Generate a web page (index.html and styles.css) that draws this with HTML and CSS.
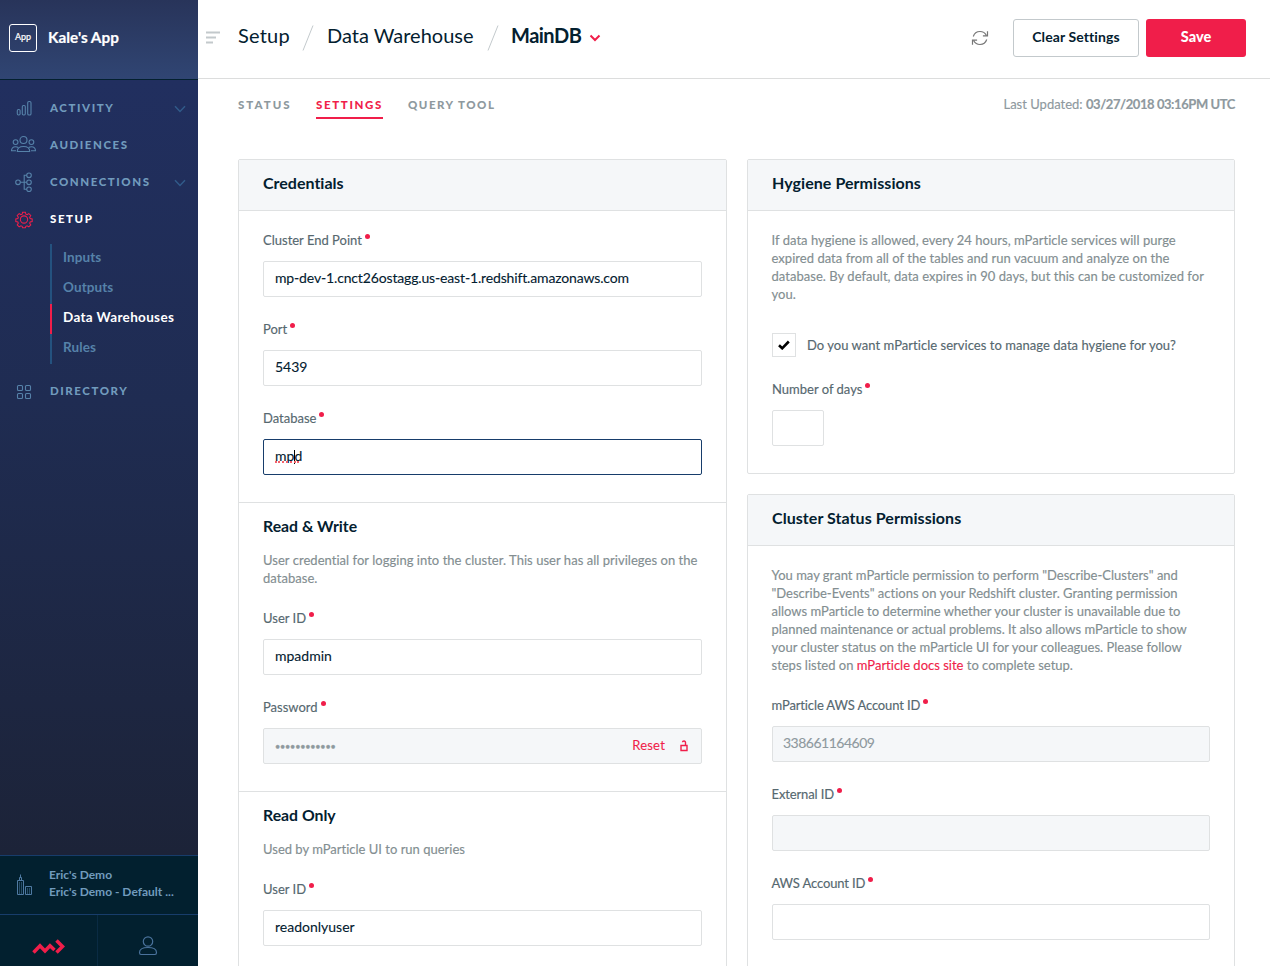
FILE: index.html
```html
<!DOCTYPE html>
<html lang="en">
<head>
<meta charset="utf-8">
<title>MainDB - Data Warehouse</title>
<link rel="stylesheet" href="styles.css">
</head>
<body>
<div class="app">
  <aside class="sidebar">
    <div class="brand">
      <span class="brand-logo">App</span>
      <span class="brand-name">Kale's App</span>
    </div>
    <nav class="nav">
      <a class="nav-item">
        <svg class="nav-icon" width="26" height="20" viewBox="0 0 26 20"><rect x="6.300" y="11.500" width="2.800" height="5.500" rx="1.200"/><rect x="11.300" y="7.500" width="3" height="9.500" rx="1.200"/><rect x="16.700" y="3.500" width="3.300" height="13.500" rx="1.300"/></svg>
        <span class="nav-text">ACTIVITY</span>
        <svg class="nav-chevron" width="12" height="8" viewBox="0 0 12 8"><path d="M1 1.200 6 6.400 11 1.200"/></svg>
      </a>
      <a class="nav-item">
        <svg class="nav-icon" width="26" height="20" viewBox="0 0 26 20"><circle cx="12.500" cy="5" r="3.500"/><circle cx="4.600" cy="7.100" r="2.400"/><circle cx="20.400" cy="7.100" r="2.400"/><path d="M6.300 16.500c0-3.300 2.800-5 6.200-5s6.200 1.700 6.200 5zM5 15.800H.5c0-2.600 1.500-4.100 4-4.100 1.100 0 2 .3 2.700.8M20 15.800h4.500c0-2.600-1.500-4.100-4-4.100-1.100 0-2 .3-2.700.8"/></svg>
        <span class="nav-text">AUDIENCES</span>
      </a>
      <a class="nav-item">
        <svg class="nav-icon" width="26" height="20" viewBox="0 0 26 20"><circle cx="7" cy="10.300" r="2.300"/><circle cx="18" cy="3.300" r="2.300"/><circle cx="18" cy="10.300" r="2.300"/><circle cx="18" cy="17.300" r="2.300"/><path d="M9.300 10.300h6.400M15.700 3.300h-2.500v14h2.500"/></svg>
        <span class="nav-text">CONNECTIONS</span>
        <svg class="nav-chevron" width="12" height="8" viewBox="0 0 12 8"><path d="M1 1.200 6 6.400 11 1.200"/></svg>
      </a>
      <a class="nav-item active">
        <svg class="nav-icon" width="26" height="20" viewBox="0 0 26 20"><g transform="translate(13 10.500) scale(.93)"><circle r="3.900"/><path d="M-1.500-7.800h3l.5 2 1.300.6 1.900-1.200 2.100 2.100-1.200 1.900.5 1.300 2.200.5v2.800l-2.200.5-.5 1.200 1.200 1.900-2.100 2.100-1.900-1.200-1.300.6-.5 1.500h-3l-.5-1.500-1.300-.6-1.900 1.200-2.100-2.100 1.200-1.900-.5-1.200-2.200-.5V-.6l2.200-.5.5-1.300-1.200-1.900 2.100-2.100 1.900 1.200 1.300-.6z"/></g></svg>
        <span class="nav-text">SETUP</span>
      </a>
      <div class="subnav">
        <a class="subnav-item">Inputs</a>
        <a class="subnav-item">Outputs</a>
        <a class="subnav-item current">Data Warehouses</a>
        <a class="subnav-item">Rules</a>
      </div>
      <a class="nav-item">
        <svg class="nav-icon" width="26" height="20" viewBox="0 0 26 20"><rect x="6.500" y="4.500" width="5" height="5" rx="1"/><rect x="14.500" y="4.500" width="5" height="5" rx="1"/><rect x="6.500" y="12.500" width="5" height="5" rx="1"/><rect x="14.500" y="12.500" width="5" height="5" rx="1"/></svg>
        <span class="nav-text">DIRECTORY</span>
      </a>
    </nav>
    <div class="account">
      <svg class="account-icon" width="16" height="22" viewBox="0 0 16 22"><path d="M.5 6.500h6v14h-6zM8.500 12.500h6v8h-6zM2.500 6.500v-3h2v3M3.500 3.500V.5"/><path class="windows" d="M2.500 8.500v11M4.500 8.500v11M10.500 14.500v5M12.500 14.500v5"/></svg>
      <div class="account-text">
        <div>Eric's Demo</div>
        <div>Eric's Demo - Default ...</div>
      </div>
    </div>
    <div class="dock">
      <div class="dock-cell logo-cell"><svg width="34" height="16" viewBox="0 0 34 16"><path class="logo-line" d="M1.500 13.500 8 6.800l5 5.200 5-5.200 4.500 4.200M24.500 1.500l6 6-6 6"/></svg></div>
      <div class="dock-cell"><svg width="20" height="20" viewBox="0 0 20 20"><g class="user-line"><circle cx="10" cy="5.500" r="4.700"/><path d="M1.500 16.500c0-3.300 3.200-5 8.500-5s8.500 1.700 8.500 5c0 1.500-.5 2-1.500 2H3c-1 0-1.500-.5-1.500-2z"/></g></svg></div>
    </div>
  </aside>

  <div class="main">
    <header class="topbar">
      <svg class="menu-icon" width="14" height="13" viewBox="0 0 14 13"><path d="M0 1.500h14M0 6.500h10M0 11.500h7"/></svg>
      <div class="crumbs">
        <span class="crumb c-setup">Setup</span>
        <svg class="slash" width="12" height="26" viewBox="0 0 12 26"><path d="M1 25.500 11 .5"/></svg>
        <span class="crumb c-warehouse">Data Warehouse</span>
        <svg class="slash" width="12" height="26" viewBox="0 0 12 26"><path d="M1 25.500 11 .5"/></svg>
        <span class="crumb c-db">MainDB</span>
        <svg class="crumb-chevron" width="12" height="8" viewBox="0 0 12 8"><path d="M1.500 1.500 6 6l4.500-4.500"/></svg>
      </div>
      <svg class="refresh" width="18" height="16" viewBox="0 0 18 16"><path d="M2.300 6.500C3.300 3.300 5.900 1.500 9 1.500c2.700 0 5 1.300 6.300 3.700M16.500 1.200v4.600h-4.600M15.700 9.500c-1 3.200-3.600 5-6.700 5-2.700 0-5-1.300-6.300-3.700M1.500 14.800v-4.600h4.600"/></svg>
      <button class="btn btn-clear">Clear Settings</button>
      <button class="btn btn-save">Save</button>
    </header>

    <div class="tabs">
      <a class="tab t-status">STATUS</a>
      <a class="tab t-settings selected">SETTINGS</a>
      <a class="tab t-query">QUERY TOOL</a>
      <div class="updated">Last Updated: <b>03/27/2018 03:16PM UTC</b></div>
    </div>

    <div class="columns">
      <section class="card">
        <h2 class="card-title">Credentials</h2>
        <div class="card-body">
          <div class="field"><label class="label">Cluster End Point<i class="req"></i></label><div class="input host">mp-dev-1.cnct26ostagg.us-east-1.redshift.amazonaws.com</div></div>
          <div class="field"><label class="label">Port<i class="req"></i></label><div class="input">5439</div></div>
          <div class="field"><label class="label">Database<i class="req"></i></label><div class="input focused"><span class="misspelled">mp<i class="caret"></i>d</span></div></div>
        </div>
        <div class="card-section">
          <h3 class="section-title">Read &amp; Write</h3>
          <p class="text loose">User credential for logging into the cluster. This user has all privileges on the<br>database.</p>
          <div class="field"><label class="label">User ID<i class="req"></i></label><div class="input">mpadmin</div></div>
          <div class="field"><label class="label">Password<i class="req"></i></label>
            <div class="input disabled"><span class="dots">••••••••••••</span><span class="reset">Reset</span><svg class="lock" width="8" height="12" viewBox="0 0 8 12"><path d="M1 5.500h6v5H1zM5.500 5.500v-3C5.500 1.500 5 1 4 1s-1.500.5-1.500 1.300"/></svg></div>
          </div>
        </div>
        <div class="card-section last">
          <h3 class="section-title">Read Only</h3>
          <p class="text">Used by mParticle UI to run queries</p>
          <div class="field"><label class="label">User ID<i class="req"></i></label><div class="input">readonlyuser</div></div>
        </div>
      </section>

      <div class="stack">
        <section class="card">
          <h2 class="card-title wide">Hygiene Permissions</h2>
          <div class="card-body">
            <p class="text loose">If data hygiene is allowed, every 24 hours, mParticle services will purge<br>expired data from all of the tables and run vacuum and analyze on the<br>database. By default, data expires in 90 days, but this can be customized for<br>you.</p>
            <div class="check-row">
              <span class="checkbox"><svg width="12" height="10" viewBox="0 0 12 10"><path d="M1 5.300 4.200 8.300 10.800 1.500"/></svg></span>
              <span class="check-text loose">Do you want mParticle services to manage data hygiene for you?</span>
            </div>
            <div class="field"><label class="label">Number of days<i class="req"></i></label><div class="input small"></div></div>
          </div>
        </section>
        <section class="card">
          <h2 class="card-title wide">Cluster Status Permissions</h2>
          <div class="card-body">
            <p class="text">You may grant mParticle permission to perform "Describe-Clusters" and<br>"Describe-Events" actions on your Redshift cluster. Granting permission<br>allows mParticle to determine whether your cluster is unavailable due to<br>planned maintenance or actual problems. It also allows mParticle to show<br>your cluster status on the mParticle UI for your colleagues. Please follow<br>steps listed on <a class="link">mParticle docs site</a> to complete setup.</p>
            <div class="field"><label class="label tight">mParticle AWS Account ID<i class="req"></i></label><div class="input disabled account-id">338661164609</div></div>
            <div class="field"><label class="label tight">External ID<i class="req"></i></label><div class="input disabled"></div></div>
            <div class="field"><label class="label tight">AWS Account ID<i class="req"></i></label><div class="input"></div></div>
          </div>
        </section>
      </div>
    </div>
  </div>
</div>
</body>
</html>
```
FILE: styles.css
```css
* { box-sizing: border-box; }
body { margin: 0; font-family: Lato, "Liberation Sans", sans-serif; font-size: 13px; color: #03202f; background: #fff; font-variant-ligatures: none; }
svg { display: block; flex: none; fill: none; }
h2, h3, p { margin: 0; }
.app { display: flex; width: 1270px; height: 966px; overflow: hidden; white-space: nowrap; }

.sidebar { width: 198px; flex: none; display: flex; flex-direction: column; background: linear-gradient(#212f5f 80px, #1f2c52 400px, #1c2338 855px); }
.brand { height: 80px; display: flex; align-items: center; padding: 0 0 4px 9px; border-bottom: 1px solid #03202f; background: linear-gradient(#28345a, #304573); }
.brand-logo { width: 28px; height: 28px; border: 1px solid #fff; border-radius: 3px; color: #fff; font-size: 9px; line-height: 24px; text-align: center; -webkit-text-stroke: .2px; }
.brand-name { margin: 0 0 2px 11px; font-size: 15.3px; font-weight: 700; color: #fff; -webkit-text-stroke: .2px; }
.nav { flex: 1; padding-top: 9px; }
.nav-item { height: 37px; display: flex; align-items: center; padding-left: 11px; color: #719bbd; }
.nav-icon { stroke: #5682a9; stroke-width: 1.1; }
.nav-text { margin-left: 13px; font-size: 11.5px; font-weight: 900; letter-spacing: 1.55px; }
.nav-chevron { margin: 3px 12px 0 auto; stroke: #315b8a; stroke-width: 1.5; }
.nav-item.active { color: #fff; }
.active .nav-icon { stroke: #f01e4a; }
.subnav { margin: 7px 0 8px 50px; }
.subnav-item { display: block; height: 30px; border-left: 2px solid #24527f; padding-left: 11px; font-size: 13.5px; line-height: 27px; font-weight: 700; color: #5682a9; letter-spacing: .1px; }
.subnav-item.current { color: #fff; border-left-color: #f01e4a; letter-spacing: .33px; }
.account { height: 59px; display: flex; align-items: center; background: #02202f; border-top: 1px solid #173d6b; padding-left: 17px; }
.account-icon { stroke: #4f7aa3; }
.windows { stroke-dasharray: 1 1; }
.account-text { margin-left: 16px; font-size: 12px; line-height: 17px; font-weight: 700; color: #719bbd; padding-bottom: 5px; }
.dock { height: 52px; display: flex; background: #02202f; border-top: 1px solid #173d6b; }
.dock-cell { flex: 1; display: flex; justify-content: center; padding: 21px 0 0; }
.logo-cell { flex: none; width: 98px; padding: 24px 0 0 0; border-right: 1px solid #0a2b43; }
.logo-line { stroke: #f01e4a; stroke-width: 3.5; }
.user-line { stroke: #4a729c; stroke-width: 1.2; }

.main { flex: 1; min-width: 0; }
.topbar { height: 79px; border-bottom: 1px solid #dcdddd; display: flex; align-items: center; padding: 0 24px 3px 8px; }
.menu-icon { stroke: #c3c9cc; stroke-width: 2; }
.crumbs { display: flex; align-items: center; flex: 1; margin-left: 18px; font-size: 20px; line-height: 26px; }
.crumb { padding-bottom: 5px; }
.c-setup { width: 51px; letter-spacing: .2px; }
.c-warehouse { width: 147px; }
.c-db { font-weight: 700; width: 70px; margin-left: -1px; letter-spacing: -.5px; }
.slash { margin: 0 13px; stroke: #c3c9cc; }
.crumb-chevron { margin-left: 8px; stroke: #f01e4a; stroke-width: 2; }
.refresh { margin-right: 24px; stroke: #777; stroke-width: 1.2; }
.btn { height: 38px; font: 700 14px Lato, "Liberation Sans", sans-serif; border-radius: 3px; padding: 0 0 2px; }
.btn-clear { width: 126px; border: 1px solid #c3c9cc; background: #fff; color: #03202f; letter-spacing: .1px; }
.btn-save { width: 100px; margin-left: 7px; border: 0; background: #f01e4a; color: #fff; font-weight: 900; font-size: 14.5px; }

.tabs { display: flex; height: 41px; padding: 13px 35px 0 40px; gap: 24px; }
.tab { height: 27px; line-height: 26px; font-size: 11.5px; font-weight: 900; color: #8e999e; }
.t-status { width: 54px; letter-spacing: 2px; }
.t-settings { width: 67px; letter-spacing: 1.65px; }
.t-query { margin-left: 1px; letter-spacing: 1.5px; }
.tab.selected { color: #f01e4a; border-bottom: 2px solid #f01e4a; }
.updated { margin-left: auto; line-height: 25px; color: #8e999e; -webkit-text-stroke: .15px; }
.updated b { letter-spacing: -.42px; }

.columns { display: grid; grid-template-columns: 489px 488px; gap: 20px; align-items: start; padding: 39px 0 0 40px; }
.stack { display: flex; flex-direction: column; gap: 20px; }
.card { border: 1px solid #dfe1e2; border-radius: 2px; }
.card-title { height: 51px; padding-left: 24px; line-height: 46px; font-size: 16px; font-weight: 700; background: #f5f7f9; border-bottom: 1px solid #dfe1e2; }
.card-title.wide { letter-spacing: .06px; }
.card-body { padding: 21px 24px 27px; }
.card-section { border-top: 1px solid #dfe1e2; padding: 14px 24px 27px; }
.card-section.last { padding-bottom: 60px; }
.section-title { font-size: 15.8px; line-height: 18px; margin-bottom: 17px; }
.section-title + .text { margin-top: -1px; padding-bottom: 1px; }
.text { color: #838e91; line-height: 18px; -webkit-text-stroke: .15px; }
.card-body .text { margin: -1px 0 0 -.5px; padding-bottom: 1px; }
.loose { letter-spacing: .035px; }
.text + .field { margin-top: 22px; }
.field + .field { margin-top: 24px; }
.label { display: flex; height: 18px; line-height: 16px; margin-bottom: 11px; color: #56686f; -webkit-text-stroke: .15px; }
.label.tight { letter-spacing: -.13px; margin-left: -.5px; }
.req { width: 5px; height: 5px; border-radius: 50%; background: #f01e4a; margin: 2px 0 0 3px; }
.input { height: 36px; border: 1px solid #dfe1e2; border-radius: 2px; padding-left: 11px; font-size: 14px; line-height: 32px; display: flex; -webkit-text-stroke: .1px; }
.input.host { letter-spacing: -.15px; }
.input.account-id { letter-spacing: -.5px; padding-left: 10px; }
.input.focused { border-color: #173d6b; }
.input.disabled { background: #f5f7f9; color: #8e999e; }
.input.small { width: 52px; }
.misspelled { position: relative; }
.misspelled::after { content: ""; position: absolute; left: 0; top: 21px; width: 24px; border-bottom: 2px dotted #f4626c; }
.caret { position: absolute; left: 19px; top: 10px; width: 1px; height: 14px; background: #000; }
.dots { flex: 1; font-size: 9px; letter-spacing: -.18px; line-height: 35px; -webkit-text-stroke: .4px; }
.reset { color: #f01e4a; font-size: 13px; line-height: 33px; letter-spacing: .2px; }
.lock { margin: 11px 13px 0 15px; stroke: #f01e4a; stroke-width: 1.4; }
.check-row { display: flex; align-items: center; margin: 29px 0 24px; color: #56686f; -webkit-text-stroke: .15px; }
.checkbox { width: 24px; height: 24px; border: 1px solid #dfe1e2; display: flex; align-items: center; justify-content: center; }
.checkbox svg { stroke: #000; stroke-width: 2.6; }
.check-text { margin: 0 0 1px 11px; }
.link { color: #f01e4a; }
```
